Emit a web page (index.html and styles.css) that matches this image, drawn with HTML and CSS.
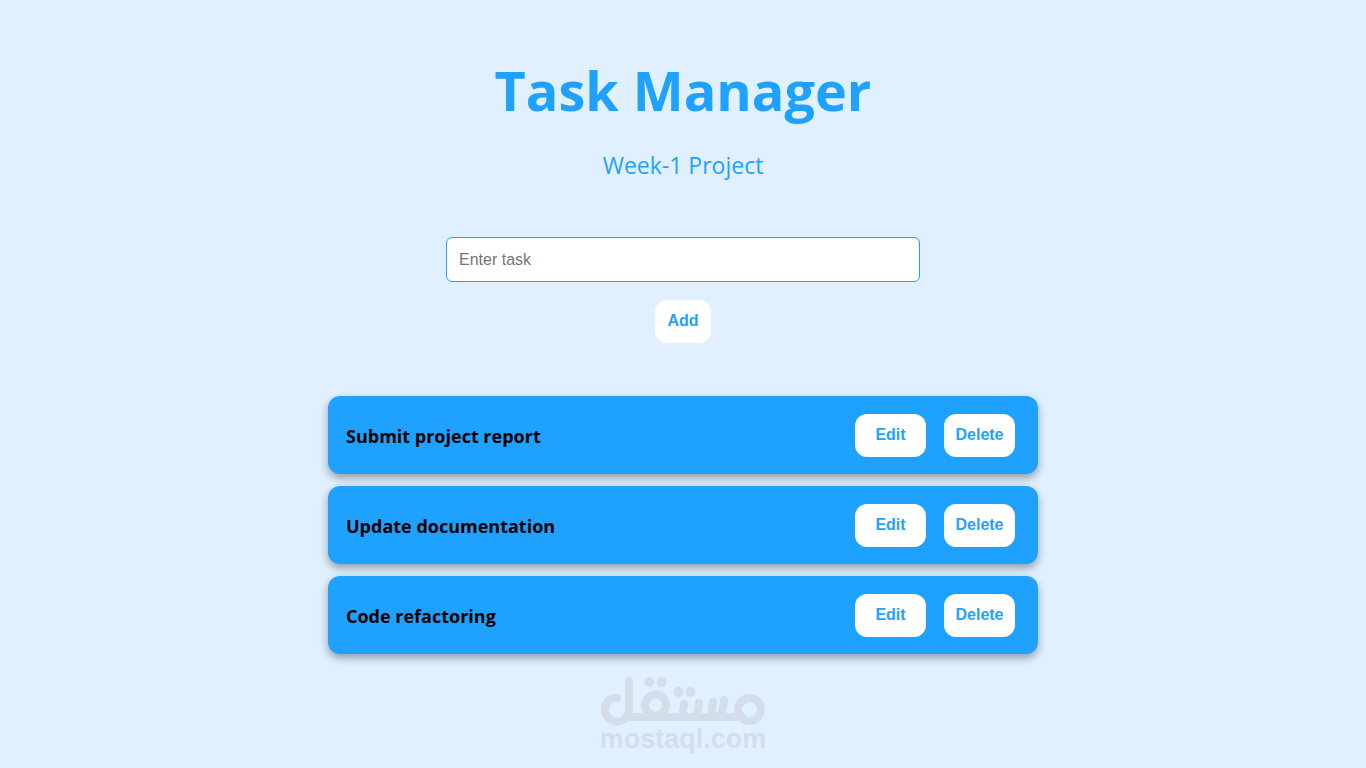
FILE: index.html
```html
<!DOCTYPE html>
<html lang="en">
<head>
<meta charset="utf-8">
<meta name="viewport" content="width=device-width, initial-scale=1">
<title>Task Manager</title>
<link rel="stylesheet" href="styles.css">
</head>
<body class="page">
<header class="header">
  <h1 class="title">Task Manager</h1>
  <p class="subtitle">Week-1 Project</p>
</header>
<main class="main">
  <form class="task-form">
    <input class="task-input" type="text" placeholder="Enter task" aria-label="Enter task">
    <button class="button" type="button">Add</button>
  </form>
  <ul class="task-list">
    <li class="task">
      <h2 class="task-name">Submit project report</h2>
      <div class="task-actions">
        <button class="button button-wide" type="button">Edit</button>
        <button class="button button-wide" type="button">Delete</button>
      </div>
    </li>
    <li class="task">
      <h2 class="task-name">Update documentation</h2>
      <div class="task-actions">
        <button class="button button-wide" type="button">Edit</button>
        <button class="button button-wide" type="button">Delete</button>
      </div>
    </li>
    <li class="task">
      <h2 class="task-name">Code refactoring</h2>
      <div class="task-actions">
        <button class="button button-wide" type="button">Edit</button>
        <button class="button button-wide" type="button">Delete</button>
      </div>
    </li>
  </ul>
</main>
<footer class="brand">
  <svg class="brand-logo" viewBox="10 11 166 50" width="166" height="50" role="img" aria-label="مستقل">
    <g fill="none" stroke="currentColor" stroke-width="8" stroke-linecap="round" stroke-linejoin="round">
      <path d="M27 33C19 32 15 38 15 44.500a12 12 0 0 0 24 0V16"/>
      <path d="M36 52H152"/>
      <circle cx="65.500" cy="40" r="10.500"/>
      <path d="M94 39L92 52M109 38L107 52M123 37L121 52M134 35L132 48Q131 52 127 52"/>
      <circle cx="159.500" cy="44.500" r="11.500"/>
    </g>
    <g fill="currentColor">
      <circle cx="59.500" cy="17" r="5"/>
      <circle cx="71.500" cy="17" r="5"/>
      <circle cx="88.500" cy="27" r="5"/>
      <circle cx="100.500" cy="27" r="5"/>
    </g>
  </svg>
  <span class="brand-name">mostaql.com</span>
</footer>
</body>
</html>
```
FILE: styles.css
```css
* {
  box-sizing: border-box;
}

.page {
  margin: 0;
  padding: 48px 16px 12px;
  background: #e0f0ff;
  color: #000;
  font-family: "Segoe UI", "Open Sans", "Noto Sans", sans-serif;
}

.header {
  color: #1fa2ff;
  text-align: center;
}

.title {
  margin: 0;
  font-size: 54px;
  line-height: 84px;
  font-weight: 700;
}

.subtitle {
  margin: 15px 0 0;
  font-size: 23px;
  line-height: 36px;
}

.main {
  display: flex;
  flex-direction: column;
  align-items: center;
  margin-top: 54px;
}

.task-form {
  display: flex;
  flex-direction: column;
  align-items: center;
  gap: 18px;
  width: 100%;
}

.task-input {
  width: 100%;
  max-width: 474px;
  padding: 12px;
  border: 1px solid #1fa2ff;
  border-radius: 6px;
  background: #fff;
  font: 16px/19px "Liberation Sans", Arial, sans-serif;
}

.task-input::placeholder {
  color: #757575;
}

.button {
  padding: 11px 12px 13px;
  border: 0;
  border-radius: 12px;
  background: #fff;
  color: #1fa2ff;
  font: bold 16px/19px "Liberation Sans", Arial, sans-serif;
  cursor: pointer;
}

.button-wide {
  min-width: 71px;
  padding-right: 11px;
  padding-left: 11px;
}

.task-list {
  display: flex;
  flex-direction: column;
  gap: 12px;
  width: 100%;
  max-width: 710px;
  margin: 53px 0 0;
  padding: 0;
  list-style: none;
}

.task {
  display: flex;
  align-items: center;
  justify-content: space-between;
  padding: 18px 23px 17px 18px;
  border-radius: 12px;
  background: #1fa2ff;
  box-shadow: 0 4px 8px rgba(0, 0, 0, 0.35);
}

.task-name {
  margin: 0;
  padding-top: 2px;
  font-size: 18px;
  line-height: 27px;
  font-weight: 700;
}

.task-actions {
  display: flex;
  gap: 18px;
}

.brand {
  display: flex;
  flex-direction: column;
  align-items: center;
  margin-top: 22px;
  color: #d3dee9;
}

.brand-name {
  font: bold 27px/26px "Liberation Sans", Arial, sans-serif;
}
```
